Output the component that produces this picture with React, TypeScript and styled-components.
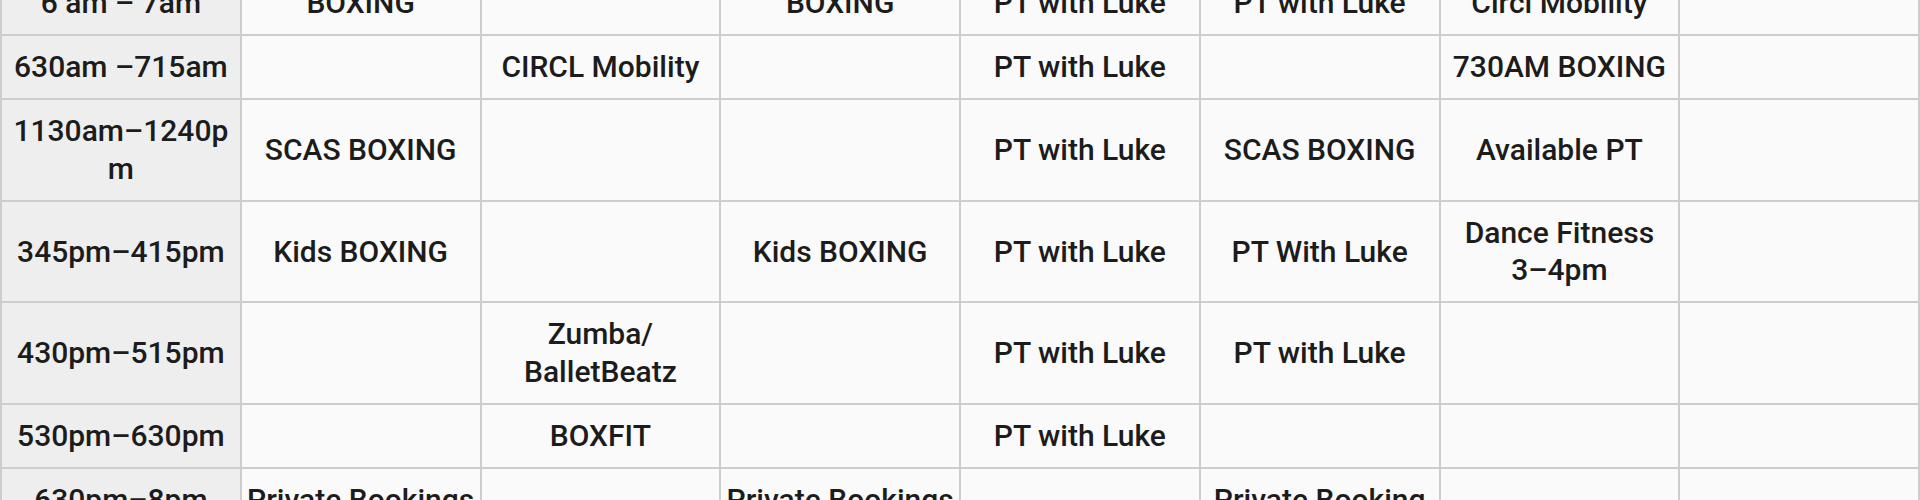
import React from 'react';
import styled, { createGlobalStyle } from 'styled-components';

const GlobalStyle = createGlobalStyle`
  html, body {
    margin: 0;
    padding: 0;
    background: #fafafa;
  }
  body {
    font-family: Roboto, "Liberation Sans", Arial, sans-serif;
  }
`;

const Viewport = styled.div`
  width: 1920px;
  height: 500px;
  overflow: hidden;
`;

const Timetable = styled.table`
  width: 1920px;
  margin-top: -30px;
  border-collapse: collapse;
  table-layout: fixed;
  color: #1c1c1c;
  font-size: 30px;
  font-weight: 500;
  line-height: 37.5px;
`;

const Cell = styled.td<{ $time?: boolean }>`
  padding: 12.25px 4px;
  border: 2px solid #cdcdcd;
  background: ${(p) => (p.$time ? '#eeeeee' : '#fafafa')};
  text-align: center;
  vertical-align: middle;
  overflow-wrap: anywhere;
`;

// word joiner after a dash keeps it from being a break point, like the original
const WJ = '\u2060';

const rows: string[][] = [
  ['6 am – 7am', 'BOXING', '', 'BOXING', 'PT with Luke', 'PT with Luke', 'Circl Mobility', ''],
  ['630am –' + WJ + '715am', '', 'CIRCL Mobility', '', 'PT with Luke', '', '730AM BOXING', ''],
  ['1130am–' + WJ + '1240pm', 'SCAS BOXING', '', '', 'PT with Luke', 'SCAS BOXING', 'Available PT', ''],
  ['345pm–' + WJ + '415pm', 'Kids BOXING', '', 'Kids BOXING', 'PT with Luke', 'PT With Luke', 'Dance Fitness 3–' + WJ + '4pm', ''],
  ['430pm–' + WJ + '515pm', '', 'Zumba/ BalletBeatz', '', 'PT with Luke', 'PT with Luke', '', ''],
  ['530pm–' + WJ + '630pm', '', 'BOXFIT', '', 'PT with Luke', '', '', ''],
  ['630pm–' + WJ + '8pm', 'Private Bookings', '', 'Private Bookings', '', 'Private Booking', '', ''],
];

export default function App() {
  return (
    <>
      <GlobalStyle />
      <Viewport>
        <Timetable>
          <tbody>
            {rows.map((row, i) => (
              <tr key={i}>
                {row.map((text, j) => (
                  <Cell key={j} $time={j === 0}>
                    {text}
                  </Cell>
                ))}
              </tr>
            ))}
          </tbody>
        </Timetable>
      </Viewport>
    </>
  );
}
